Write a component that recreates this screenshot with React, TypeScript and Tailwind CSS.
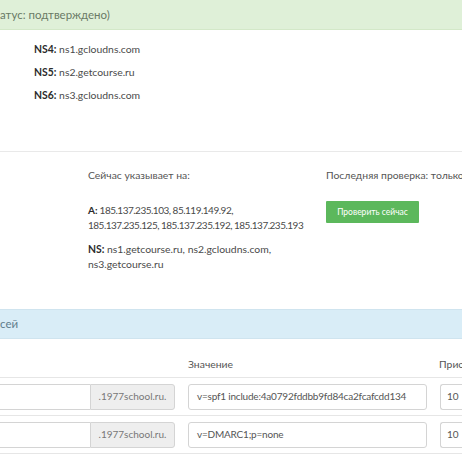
const font = { fontFamily: 'Lato, "Open Sans", sans-serif' }

function NsLine({ label, value }: { label: string; value: string }) {
  return (
    <div className="h-[23px] leading-[12px]">
      <span className="font-bold text-[#2b2b2b]">{label}</span> {value}
    </div>
  )
}

function DnsRow({ value }: { value: string }) {
  return (
    <div className="flex items-center h-[38px] border-b border-[#e6e6e6] text-[10px]">
      <div className="flex shrink-0 w-[187px] -ml-[12px]">
        <div className="flex-1 h-[26px] border border-[#d4d4d4] border-r-0 rounded-l-[3px] bg-white" />
        <div className="w-[85px] h-[26px] border border-[#d4d4d4] rounded-r-[3px] bg-[#eeeeee] flex items-center justify-center text-[#777]">
          .1977school.ru.
        </div>
      </div>
      <div className="shrink-0 ml-[13px] w-[239px] h-[26px] border border-[#d4d4d4] rounded-[3px] flex items-center px-[8px] text-[#555] whitespace-nowrap overflow-hidden tracking-[-0.2px]">
        {value}
      </div>
      <div className="shrink-0 ml-[13px] w-[40px] h-[26px] border border-[#d4d4d4] border-r-0 rounded-l-[3px] flex items-center px-[6px] text-[#555]">
        10
      </div>
    </div>
  )
}

export default function App() {
  return (
    <div className="w-[462px] h-[461px] overflow-hidden bg-white text-[10.4px] text-[#4a4a4a]" style={font}>
      <div className="h-[30px] bg-[#dff0d8] border-b border-[#d3e8c8] flex items-center text-[11.5px] text-[#6a7a66]">
        атус: подтверждено)
      </div>

      <div className="pl-[34px] pt-[13px] h-[122px] border-b border-[#e9e9e9]">
        <NsLine label="NS4:" value="ns1.gcloudns.com" />
        <NsLine label="NS5:" value="ns2.getcourse.ru" />
        <NsLine label="NS6:" value="ns3.gcloudns.com" />
      </div>

      <div className="flex h-[157px] pt-[17px]">
        <div className="w-[88px] shrink-0" />
        <div className="w-[238px] shrink-0">
          <div className="h-[12px] leading-[12px] text-[#555]">Сейчас указывает на:</div>
          <div className="mt-[22px] leading-[15px] whitespace-nowrap text-[10px] tracking-[-0.5px]">
            <span className="font-bold text-[#2b2b2b] tracking-normal">A:</span> 185.137.235.103, 85.119.149.92,
            <br />
            185.137.235.125, 185.137.235.192, 185.137.235.193
          </div>
          <div className="mt-[9px] leading-[15px] whitespace-nowrap">
            <span className="font-bold text-[#2b2b2b]">NS:</span> ns1.getcourse.ru, ns2.gcloudns.com,
            <br />
            ns3.getcourse.ru
          </div>
        </div>
        <div className="flex-1 min-w-0 whitespace-nowrap overflow-hidden">
          <div className="h-[12px] leading-[12px] text-[#555]">Последняя проверка: только что</div>
          <button
            type="button"
            className="mt-[20px] w-[93px] h-[22px] bg-[#5cb85c] text-white text-[8.5px] rounded-[1px]"
          >
            Проверить сейчас
          </button>
        </div>
      </div>

      <div className="h-[30px] bg-[#d9edf7] border-y border-[#cfe4ef] flex items-center text-[11.5px] text-[#5f7d8c]">
        сей
      </div>

      <div className="flex h-[39px] pt-[18px] border-b border-[#e6e6e6] text-[#555] whitespace-nowrap">
        <div className="w-[188px] shrink-0" />
        <div className="w-[251px] shrink-0">Значение</div>
        <div className="min-w-0 overflow-hidden">Приоритет</div>
      </div>

      <DnsRow value="v=spf1 include:4a0792fddbb9fd84ca2fcafcdd134" />
      <DnsRow value="v=DMARC1;p=none" />
    </div>
  )
}
